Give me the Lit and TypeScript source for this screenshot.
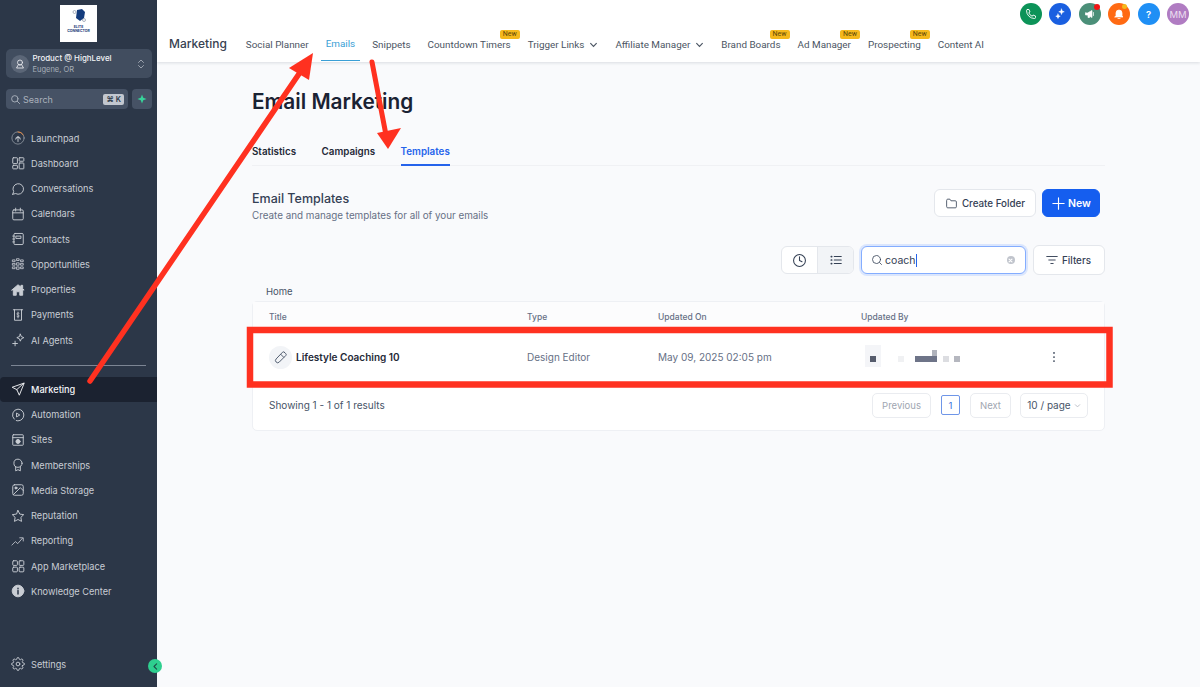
import { LitElement, html, css, svg } from "lit";
import { customElement } from "lit/decorators.js";

const I = (body: unknown, size = 15, sw = 1.6) => html`<svg class="ic" width=${size} height=${size} viewBox="0 0 24 24" fill="none" stroke="currentColor" stroke-width=${sw} stroke-linecap="round" stroke-linejoin="round">${body}</svg>`;

const icons: Record<string, unknown> = {
  launch: svg`<circle cx="12" cy="12" r="10.5" stroke-opacity=".55"/><path d="M12 1.5a10.5 10.5 0 0 1 9 5" stroke="#e8853a"/><path d="M8 14a4 4 0 1 1 8 0M12 18v-8M9.8 12 12 10l2.2 2" />`,
  dash: svg`<rect x="3" y="3" width="8" height="10" rx="1"/><rect x="14" y="3" width="8" height="6" rx="1"/><rect x="14" y="12" width="8" height="10" rx="1"/><rect x="3" y="16" width="8" height="6" rx="1"/>`,
  chat: svg`<path d="M3 21l1.6-4.6A9 9 0 1 1 8 19.8L3 21z"/>`,
  cal: svg`<rect x="3" y="5" width="18" height="17" rx="2"/><path d="M8 2v5M16 2v5M3 10h18"/>`,
  contact: svg`<rect x="5" y="2.5" width="16" height="19" rx="2"/><path d="M9 7h8v4H9zM3 7h3M3 12h3M3 17h3"/>`,
  opp: svg`<path d="M3 5h4v3H3zM10 3h4v3h-4zM17 5h4v3h-4zM3 11h4v3H3zM10 10h4v4h-4zM17 11h4v3h-4zM3 17h4v3H3zM10 17h4v4h-4zM17 17h4v3h-4z" stroke-width="1.4"/>`,
  prop: svg`<path d="M1.5 12 12 3l5 4V4h3v6l2.5 2H20v9h-5v-6H9v6H4v-9z" fill="currentColor"/>`,
  pay: svg`<path d="M4 3h16M6 3v18h12V3"/><path d="M14 9.5c-.4-.8-1.2-1-2-1-1.1 0-2 .6-2 1.6 0 2.200 4 1.400 4 3.600 0 1-.9 1.600-2 1.600-.9 0-1.700-.4-2-1.200M12 7v10" stroke-width="1.300"/>`,
  ai: svg`<path d="M16 2l1.800 4.200L22 8l-4.200 1.800L16 14l-1.800-4.200L10 8l4.200-1.800zM7 14v8M3 18h8"/>`,
  send: svg`<path d="M22 2 2 9l8 4 4 9zM22 2 10 13"/>`,
  auto: svg`<path d="M5.500 19A10 10 0 0 1 12 2a10 10 0 0 1 10 10 10 10 0 0 1-10 10c-1 0-2-.1-3-.5"/><path d="M10 9l5 3-5 3z"/>`,
  sites: svg`<rect x="3" y="3" width="18" height="18" rx="1"/><path d="M3 8h18"/><circle cx="12" cy="14.500" r="3.500" fill="currentColor"/>`,
  member: svg`<circle cx="12" cy="9" r="7"/><path d="M8 15v7l4-2 4 2v-7"/>`,
  media: svg`<rect x="3" y="3" width="18" height="18" rx="3"/><circle cx="8.500" cy="8.500" r="1.800" fill="currentColor"/><path d="M21 13l-5-5L4 20"/>`,
  star: svg`<path d="M12 2.500l3 6.200 6.800 1-4.900 4.700 1.200 6.800-6.100-3.200-6.100 3.200 1.200-6.800L2.200 9.700l6.800-1z"/>`,
  report: svg`<path d="M1.500 19l6-6 4 3.500 8-9M15 6.500h6V12" stroke-width="1.400"/>`,
  apps: svg`<rect x="3" y="3" width="8" height="8" rx="1.500"/><rect x="14" y="3" width="8" height="8" rx="1.500"/><rect x="3" y="14" width="8" height="8" rx="1.500"/><rect x="14" y="14" width="8" height="8" rx="1.500"/>`,
  info: svg`<circle cx="12" cy="12" r="10" fill="currentColor"/><path d="M12 11v6M12 7.500v.5" stroke="#2c3748" stroke-width="2.600"/>`,
  gear: svg`<circle cx="12" cy="12" r="3.200"/><path d="M19.400 15a1.700 1.700 0 0 0 .3 1.800l.1.1a2 2 0 1 1-2.900 2.900l-.1-.1a1.700 1.700 0 0 0-2.800 1.200V21a2 2 0 1 1-4 0v-.1a1.700 1.700 0 0 0-2.900-1.100l-.1.100a2 2 0 1 1-2.800-2.900l.1-.1a1.700 1.700 0 0 0-1.200-2.800H3a2 2 0 1 1 0-4h.1a1.700 1.700 0 0 0 1.100-2.900l-.1-.1A2 2 0 1 1 7 4.200l.1.1a1.700 1.700 0 0 0 1.800.3H9a1.700 1.700 0 0 0 1-1.500V3a2 2 0 1 1 4 0v.1a1.700 1.700 0 0 0 2.900 1.100l.1-.1A2 2 0 1 1 19.800 7l-.1.1a1.700 1.700 0 0 0-.3 1.800V9a1.700 1.700 0 0 0 1.500 1h.1a2 2 0 1 1 0 4h-.1a1.700 1.700 0 0 0-1.500 1z"/>`,
};

const top1 = [["Launchpad","launch"],["Dashboard","dash"],["Conversations","chat"],["Calendars","cal"],["Contacts","contact"],["Opportunities","opp"],["Properties","prop"],["Payments","pay"],["AI Agents","ai"]];
const top2 = [["Marketing","send"],["Automation","auto"],["Sites","sites"],["Memberships","member"],["Media Storage","media"],["Reputation","star"],["Reporting","report"],["App Marketplace","apps"],["Knowledge Center","info"]];
const tabs = [
  { t: "Social Planner" }, { t: "Emails", active: true }, { t: "Snippets" }, { t: "Countdown Timers", isNew: true },
  { t: "Trigger Links", chev: true }, { t: "Affiliate Manager", chev: true }, { t: "Brand Boards", isNew: true },
  { t: "Ad Manager", isNew: true }, { t: "Prospecting", isNew: true }, { t: "Content AI" },
];
const chev = html`<svg class="chev" width="9" height="9" viewBox="0 0 10 10" fill="none" stroke="currentColor" stroke-width="1.300"><path d="M1.500 3.500 5 7l3.500-3.500"/></svg>`;

@customElement("app-root")
export class AppRoot extends LitElement {
  static styles = css`
    :host { display: flex; position: relative; width: 1200px; height: 687px; overflow: hidden; font-family: Inter, "Liberation Sans", sans-serif; background: #f9fafc; color: #1f2937; }
    .side { width: 157px; flex: none; background: #2c3748; color: #d3d7dd; display: flex; flex-direction: column; position: relative; }
    .logo { align-self: center; width: 37px; height: 37px; margin-top: 5px; background: #fff; display: flex; flex-direction: column; align-items: center; color: #1c3a78; font-size: 3.500px; font-weight: 700; line-height: 4px; text-align: center; }
    .logo svg { margin-top: 4px; margin-bottom: 2px; }
    .loc { margin: 7px 5px 0 6px; height: 29px; background: #414d5f; border-radius: 5px; display: flex; align-items: center; padding: 0 5px; gap: 3.500px; }
    .av { width: 18px; height: 18px; border-radius: 50%; background: #5b6677; display: flex; align-items: center; justify-content: center; color: #e5e7eb; flex: none; }
    .loc .txt { flex: 1; display: flex; flex-direction: column; gap: 1px; padding-top: 1px; }
    .loc b { font-size: 7.900px; font-weight: 500; color: #f3f4f6; line-height: 11px; white-space: nowrap; }
    .loc span { font-size: 7.500px; color: #a6adb8; line-height: 10px; }
    .updown { color: #b8bec7; display: flex; }
    .srow { margin: 11px 5px 0 6px; display: flex; gap: 4px; height: 20px; }
    .search { flex: 1; background: #465265; border-radius: 4px; display: flex; align-items: center; padding: 0 4px; gap: 2px; color: #aab1bc; font-size: 9px; }
    .search span { flex: 1; }
    .search kbd { font-family: Inter, sans-serif; background: #c2c7cf; color: #2c3748; font-size: 7.500px; font-weight: 600; border-radius: 2px; padding: 0 3px; line-height: 11px; }
    .spark { width: 20px; background: #465265; border-radius: 4px; display: flex; align-items: center; justify-content: center; }
    .nav { display: flex; flex-direction: column; }
    .nav.a { margin-top: 16.500px; }
    .item { height: 25.250px; display: flex; align-items: center; gap: 6px; padding-left: 11px; font-size: 9.200px; color: #c9cdd4; white-space: nowrap; }
    .item .ic { flex: none; width: 14px; height: 14px; }
    .item.on { background: #1b2230; color: #f3f4f6; font-weight: 500; border-radius: 4px 0 0 4px; }
    .rule { height: 1px; background: #7c8594; margin: 12px 11px 11px; }
    .foot { margin-top: auto; margin-bottom: 10px; }
    .toggle { position: absolute; left: 148px; top: 659px; width: 14px; height: 14px; border-radius: 50%; background: #2ecf8f; color: #1d4f49; display: flex; align-items: center; justify-content: center; }

    .main { flex: 1; min-width: 0; display: flex; flex-direction: column; }
    .bar { height: 62px; flex: none; background: #fff; box-shadow: 0 1px 3px rgba(30,40,60,.14); display: flex; flex-direction: column; position: relative; }
    .util { height: 28px; padding: 3px 11px 0 0; box-sizing: border-box; display: flex; justify-content: flex-end; gap: 7.400px; }
    .cir { position: relative; width: 22px; height: 22px; border-radius: 50%; display: flex; align-items: center; justify-content: center; color: #fff; font-size: 9.500px; }
    .dot { position: absolute; width: 6px; height: 6px; border-radius: 50%; right: 1px; top: 1px; }
    .tabs { height: 34px; padding-left: 12px; display: flex; align-items: stretch; gap: 7px; font-family: Roboto, sans-serif; }
    .brand { font-size: 12px; font-weight: 500; color: #374151; font-family: Inter, sans-serif; margin-right: 7px; align-self: center; margin-top: -3px; }
    .tab { position: relative; padding: 0 5px; display: flex; align-items: center; gap: 5px; font-size: 9.900px; color: #4b5563; white-space: nowrap; box-sizing: border-box; height: 33px; }
    .tab.on { color: #3a9fd6; border-bottom: 1px solid #3a9fd6; padding-bottom: 2px; }
    .new { position: absolute; right: -4px; top: 2px; width: 20px; height: 9px; background: #f5b81c; border-radius: 2px; color: #5b4708; font-size: 7px; line-height: 9px; text-align: center; }

    .body { padding: 26px 95px 0; flex: 1; }
    h1 { margin: 0; font-size: 20.800px; line-height: 28px; font-weight: 600; color: #1a2233; }
    .pt { margin-top: 21px; height: 29px; display: flex; gap: 25.500px; border-bottom: 1px solid #f0f1f4; box-sizing: border-box; }
    .pt div { font-size: 9.800px; font-weight: 600; color: #1f2937; line-height: 29px; height: 29px; box-sizing: border-box; }
    .pt .on { color: #2563eb; border-bottom: 2px solid #2563eb; }
    .head { margin-top: 23px; height: 28px; display: flex; justify-content: space-between; padding-right: 5px; }
    .head h2 { margin: 0; font-size: 12.500px; font-weight: 500; line-height: 19px; color: #344054; }
    .head p { margin: 0; font-size: 9.830px; line-height: 14px; color: #667085; }
    .acts { display: flex; gap: 6px; }
    .btn { box-sizing: border-box; height: 28px; background: #fff; border: 1px solid #e4e7ec; border-radius: 6px; display: flex; align-items: center; justify-content: center; gap: 4px; font-size: 9.800px; font-weight: 500; color: #344054; }
    .cf { width: 102px; }
    .nw { width: 58px; background: #155eef; border-color: #155eef; color: #fff; font-size: 10.500px; font-weight: 600; gap: 2px; }
    .tools { margin-top: 28px; height: 30px; display: flex; justify-content: flex-end; align-items: center; gap: 7px; }
    .seg { display: flex; height: 28px; box-sizing: border-box; border: 1px solid #e4e7ec; border-radius: 6px; overflow: hidden; background: #fff; }
    .seg div { width: 35px; display: flex; align-items: center; justify-content: center; color: #344054; }
    .seg div + div { background: #f2f4f7; border-left: 1px solid #e4e7ec; }
    .inp { box-sizing: border-box; width: 165px; height: 28px; background: #fff; border: 1px solid #84adff; border-radius: 6px; box-shadow: 0 0 0 2px #dbe6fd; display: flex; align-items: center; padding: 0 10px; gap: 2px; font-size: 10.500px; color: #344054; }
    .inp .ic { margin-left: -1px; }
    .inp span { flex: 1; padding-top: 1px; }
    .inp i { display: inline-block; width: 1px; height: 13px; background: #2563eb; vertical-align: -3px; }
    .clr { width: 8px; height: 8px; border-radius: 50%; background: #c0c4cc; color: #fff; display: flex; align-items: center; justify-content: center; flex: none; }
    .flt { width: 72px; height: 30px; gap: 3px; padding-right: 2px; font-size: 9.800px; }
    .home { margin-top: 10px; padding-left: 14px; font-size: 9.500px; line-height: 14px; color: #475467; }
    .card { margin-top: 2px; height: 130px; box-sizing: border-box; background: #fff; border: 1px solid #eef0f4; border-radius: 5px; display: flex; flex-direction: column; }
    .grid { display: grid; grid-template-columns: 258px 131px 203px 186px 1fr; padding-left: 16px; align-items: center; }
    .th { height: 30px; font-size: 8.500px; font-weight: 500; color: #667085; background: #fcfcfd; }
    .tr { height: 50px; font-size: 10px; color: #667085; }
    .name { display: flex; align-items: center; gap: 4px; color: #1f2937; font-weight: 600; font-size: 10px; }
    .pen { width: 23px; height: 23px; border-radius: 50%; background: #f2f4f7; color: #475467; display: flex; align-items: center; justify-content: center; }
    .more { display: flex; color: #344054; }
    .pg { flex: 1; display: flex; align-items: center; padding: 0 16px 0 16px; margin-top: -2px; font-size: 10px; color: #475467; gap: 10px; }
    .pg > span { flex: 1; }
    .pb { box-sizing: border-box; height: 25px; border: 1px solid #eaecf0; border-radius: 5px; display: flex; align-items: center; justify-content: center; color: #a0a6b1; font-size: 9.500px; }
    .p1 { height: 20px; width: 19px; border-color: #6f96e8; border-radius: 2px; color: #3b6fdc; }
    .ps { color: #475467; gap: 3px; font-size: 10px; }
    .ps .chev { color: #b5bac3; width: 7px; height: 7px; }
    .overlay { position: absolute; left: 0; top: 0; pointer-events: none; }
  `;

  private nav(list: string[][], cls: string) {
    return html`<div class="nav ${cls}">${list.map(([t, k]) => html`<div class="item ${t === "Marketing" ? "on" : ""}">${I(icons[k])}<span>${t}</span></div>`)}</div>`;
  }

  render() {
    return html`
      <aside class="side">
        <div class="logo">
          <svg width="16" height="14" viewBox="0 0 16 14"><path d="M6 1l5-1 3 3-1 6-4 3-4-3z" fill="#143c7d"/><circle cx="3.500" cy="3" r="1.500" fill="none" stroke="#8a94a6" stroke-width=".7"/><circle cx="13" cy="11" r="1.500" fill="none" stroke="#8a94a6" stroke-width=".7"/></svg>
          <span>ELITE<br />CONNECTOR</span>
        </div>
        <div class="loc">
          <div class="av">${I(svg`<circle cx="12" cy="9" r="5"/><path d="M12 14l-3-1-4 7h14l-4-7z"/>`, 12, 1.800)}</div>
          <div class="txt"><b>Product @ HighLevel</b><span>Eugene, OR</span></div>
          <div class="updown">${I(svg`<path d="M7 9l5-5 5 5M7 15l5 5 5-5"/>`, 12, 1.500)}</div>
        </div>
        <div class="srow">
          <div class="search">${I(svg`<circle cx="10.500" cy="10.500" r="7"/><path d="M16 16l5 5"/>`, 11, 2)}<span>Search</span><kbd>⌘ K</kbd></div>
          <div class="spark"><svg width="10" height="10" viewBox="0 0 24 24"><path d="M12 1l3 8 8 3-8 3-3 8-3-8-8-3 8-3z" fill="#37d39a"/></svg></div>
        </div>
        ${this.nav(top1, "a")}
        <div class="rule"></div>
        ${this.nav(top2, "b")}
        <div class="nav foot">${this.nav([["Settings", "gear"]], "")}</div>
      </aside>
      <div class="toggle">${I(svg`<path d="M15 5l-7 7 7 7"/>`, 9, 3)}</div>
      <div class="main">
        <header class="bar">
          <div class="util">
            <div class="cir" style="background:#0c9358">${I(svg`<path d="M5 3h3l2 5-2.500 1.500a12 12 0 0 0 7 7L16 14l5 2v3a2 2 0 0 1-2 2A16 16 0 0 1 3 5a2 2 0 0 1 2-2z"/>`, 12, 1.800)}</div>
            <div class="cir" style="background:#1a5fe0">${I(svg`<path d="M15 2l1.500 4 4 1.500-4 1.500-1.500 4-1.500-4-4-1.500 4-1.500zM8 12l1.300 3.200L12.500 16.500l-3.200 1.300L8 21l-1.300-3.200L3.500 16.500l3.200-1.300z" fill="#fff"/>`, 12, 1)}</div>
            <div class="cir" style="background:#4b8f78">${I(svg`<path d="M3 10v4h4l9 5V5L7 10zM8 14v5h3v-3.500M19 9v6" fill="#fff"/>`, 12, 1.400)}<span class="dot" style="background:#f01414"></span></div>
            <div class="cir" style="background:#ff6a13">${I(svg`<path d="M6 16V10a6 6 0 0 1 12 0v6l2 2H4zM10 21h4" fill="#fff"/>`, 12, 1.500)}<span class="dot" style="background:#f5b81c;width:5px;height:5px;right:3px"></span></div>
            <div class="cir" style="background:#1f8ff5;font-weight:600">?</div>
            <div class="cir" style="background:#b07cc2;color:#ecdff0">MM</div>
          </div>
          <nav class="tabs">
            <div class="brand">Marketing</div>
            ${tabs.map((t) => html`<div class="tab ${t.active ? "on" : ""}">${t.t}${t.chev ? chev : ""}${t.isNew ? html`<span class="new">New</span>` : ""}</div>`)}
          </nav>
        </header>
        <section class="body">
          <h1>Email Marketing</h1>
          <div class="pt"><div>Statistics</div><div>Campaigns</div><div class="on">Templates</div></div>
          <div class="head">
            <div><h2>Email Templates</h2><p>Create and manage templates for all of your emails</p></div>
            <div class="acts">
              <div class="btn cf">${I(svg`<path d="M3 6a2 2 0 0 1 2-2h4l2 3h8a2 2 0 0 1 2 2v9a2 2 0 0 1-2 2H5a2 2 0 0 1-2-2z"/>`, 13, 1.500)}Create Folder</div>
              <div class="btn nw">${I(svg`<path d="M12 3v18M3 12h18"/>`, 15, 1.800)}New</div>
            </div>
          </div>
          <div class="tools">
            <div class="seg">
              <div>${I(svg`<circle cx="12" cy="12" r="9.500"/><path d="M12 6v6l4 2"/>`, 15, 1.700)}</div>
              <div>${I(svg`<path d="M9 6h12M9 12h12M9 18h12"/><path d="M4 6h.5M4 12h.5M4 18h.5" stroke-width="3"/>`, 14, 1.800)}</div>
            </div>
            <div class="inp">
              ${I(svg`<circle cx="11" cy="11" r="8"/><path d="M17 17l4 4"/>`, 12, 1.600)}
              <span>coach<i></i></span>
              <div class="clr">${I(svg`<path d="M7 7l10 10M17 7 7 17"/>`, 7, 4)}</div>
            </div>
            <div class="btn flt">${I(svg`<path d="M3 6h18M6.500 12h11M10 18h4"/>`, 14, 1.600)}Filters</div>
          </div>
          <div class="home">Home</div>
          <div class="card">
            <div class="grid th"><span>Title</span><span>Type</span><span>Updated On</span><span>Updated By</span><span></span></div>
            <div class="grid tr">
              <div class="name"><div class="pen">${I(svg`<path d="M18 3.500l2.500 2.500a2 2 0 0 1 0 2.800L10 19.300a3.500 3.500 0 0 1-5-5L15.300 3.500a2 2 0 0 1 2.700 0zM12.500 7l4.500 4.500"/>`, 15, 1.500)}</div><span>Lifestyle Coaching 10</span></div>
              <span>Design Editor</span>
              <span>May 09, 2025 02:05 pm</span>
              <svg width="100" height="24" viewBox="0 0 100 24">
                <rect x="4" y="0" width="16" height="22" fill="#f4f5f8"/><rect x="9" y="11" width="6" height="6" fill="#565c6c"/>
                <rect x="37" y="11" width="6" height="6" fill="#f0f1f3"/><rect x="54" y="11" width="22" height="6" fill="#6e7488"/>
                <rect x="71" y="5" width="5" height="6" fill="#b0b3bc"/><rect x="82" y="11" width="6" height="6" fill="#dcdde1"/><rect x="93" y="11" width="6" height="6" fill="#b5b7bf"/>
              </svg>
              <div class="more">${I(svg`<path d="M12 5v.01M12 12v.01M12 19v.01"/>`, 14, 3)}</div>
            </div>
            <div class="pg">
              <span>Showing 1 - 1 of 1 results</span>
              <div class="pb" style="width:59px">Previous</div>
              <div class="pb p1">1</div>
              <div class="pb" style="width:41px">Next</div>
              <div class="pb ps" style="width:68px;margin-left:-1px">10 / page ${chev}</div>
            </div>
          </div>
        </section>
      </div>
      <svg class="overlay" width="1200" height="687" viewBox="0 0 1200 687" fill="none">
        <rect x="250" y="330" width="859.500" height="54.500" stroke="#ff3120" stroke-width="6.500"/>
        <path d="M90 381 303 68" stroke="#ff3120" stroke-width="5.500" stroke-linecap="round"/>
        <path d="M313 53 289 68 309 80z" fill="#ff3120"/>
        <path d="M372 62 386 135" stroke="#ff3120" stroke-width="5" stroke-linecap="round"/>
        <path d="M388 149 377 133 401 128z" fill="#ff3120"/>
      </svg>
    `;
  }
}
